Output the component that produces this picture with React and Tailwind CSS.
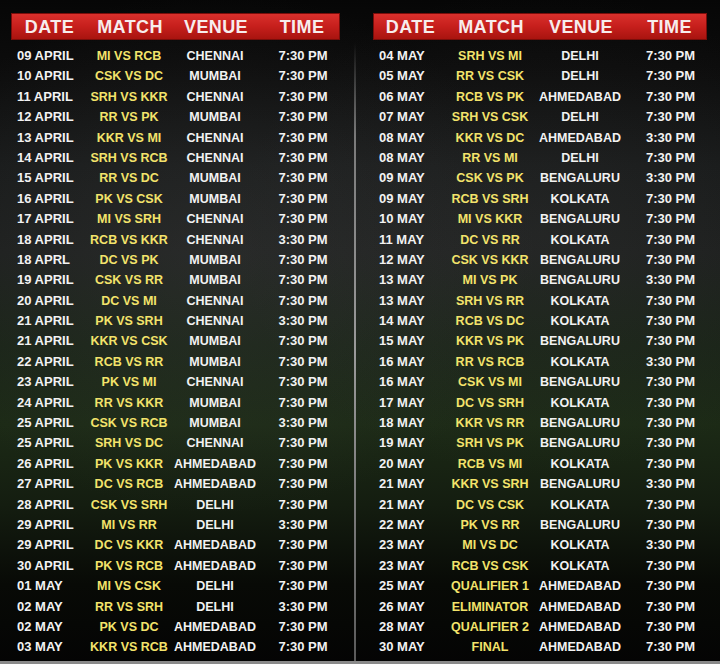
import React from "react";

const leftRows = [
  ["09 APRIL", "MI VS RCB", "CHENNAI", "7:30 PM"],
  ["10 APRIL", "CSK VS DC", "MUMBAI", "7:30 PM"],
  ["11 APRIL", "SRH VS KKR", "CHENNAI", "7:30 PM"],
  ["12 APRIL", "RR VS PK", "MUMBAI", "7:30 PM"],
  ["13 APRIL", "KKR VS MI", "CHENNAI", "7:30 PM"],
  ["14 APRIL", "SRH VS RCB", "CHENNAI", "7:30 PM"],
  ["15 APRIL", "RR VS DC", "MUMBAI", "7:30 PM"],
  ["16 APRIL", "PK VS CSK", "MUMBAI", "7:30 PM"],
  ["17 APRIL", "MI VS SRH", "CHENNAI", "7:30 PM"],
  ["18 APRIL", "RCB VS KKR", "CHENNAI", "3:30 PM"],
  ["18 APRL", "DC VS PK", "MUMBAI", "7:30 PM"],
  ["19 APRIL", "CSK VS RR", "MUMBAI", "7:30 PM"],
  ["20 APRIL", "DC VS MI", "CHENNAI", "7:30 PM"],
  ["21 APRIL", "PK VS SRH", "CHENNAI", "3:30 PM"],
  ["21 APRIL", "KKR VS CSK", "MUMBAI", "7:30 PM"],
  ["22 APRIL", "RCB VS RR", "MUMBAI", "7:30 PM"],
  ["23 APRIL", "PK VS MI", "CHENNAI", "7:30 PM"],
  ["24 APRIL", "RR VS KKR", "MUMBAI", "7:30 PM"],
  ["25 APRIL", "CSK VS RCB", "MUMBAI", "3:30 PM"],
  ["25 APRIL", "SRH VS DC", "CHENNAI", "7:30 PM"],
  ["26 APRIL", "PK VS KKR", "AHMEDABAD", "7:30 PM"],
  ["27 APRIL", "DC VS RCB", "AHMEDABAD", "7:30 PM"],
  ["28 APRIL", "CSK VS SRH", "DELHI", "7:30 PM"],
  ["29 APRIL", "MI VS RR", "DELHI", "3:30 PM"],
  ["29 APRIL", "DC VS KKR", "AHMEDABAD", "7:30 PM"],
  ["30 APRIL", "PK VS RCB", "AHMEDABAD", "7:30 PM"],
  ["01 MAY", "MI VS CSK", "DELHI", "7:30 PM"],
  ["02 MAY", "RR VS SRH", "DELHI", "3:30 PM"],
  ["02 MAY", "PK VS DC", "AHMEDABAD", "7:30 PM"],
  ["03 MAY", "KKR VS RCB", "AHMEDABAD", "7:30 PM"],
];

const rightRows = [
  ["04 MAY", "SRH VS MI", "DELHI", "7:30 PM"],
  ["05 MAY", "RR VS CSK", "DELHI", "7:30 PM"],
  ["06 MAY", "RCB VS PK", "AHMEDABAD", "7:30 PM"],
  ["07 MAY", "SRH VS CSK", "DELHI", "7:30 PM"],
  ["08 MAY", "KKR VS DC", "AHMEDABAD", "3:30 PM"],
  ["08 MAY", "RR VS MI", "DELHI", "7:30 PM"],
  ["09 MAY", "CSK VS PK", "BENGALURU", "3:30 PM"],
  ["09 MAY", "RCB VS SRH", "KOLKATA", "7:30 PM"],
  ["10 MAY", "MI VS KKR", "BENGALURU", "7:30 PM"],
  ["11 MAY", "DC VS RR", "KOLKATA", "7:30 PM"],
  ["12 MAY", "CSK VS KKR", "BENGALURU", "7:30 PM"],
  ["13 MAY", "MI VS PK", "BENGALURU", "3:30 PM"],
  ["13 MAY", "SRH VS RR", "KOLKATA", "7:30 PM"],
  ["14 MAY", "RCB VS DC", "KOLKATA", "7:30 PM"],
  ["15 MAY", "KKR VS PK", "BENGALURU", "7:30 PM"],
  ["16 MAY", "RR VS RCB", "KOLKATA", "3:30 PM"],
  ["16 MAY", "CSK VS MI", "BENGALURU", "7:30 PM"],
  ["17 MAY", "DC VS SRH", "KOLKATA", "7:30 PM"],
  ["18 MAY", "KKR VS RR", "BENGALURU", "7:30 PM"],
  ["19 MAY", "SRH VS PK", "BENGALURU", "7:30 PM"],
  ["20 MAY", "RCB VS MI", "KOLKATA", "7:30 PM"],
  ["21 MAY", "KKR VS SRH", "BENGALURU", "3:30 PM"],
  ["21 MAY", "DC VS CSK", "KOLKATA", "7:30 PM"],
  ["22 MAY", "PK VS RR", "BENGALURU", "7:30 PM"],
  ["23 MAY", "MI VS DC", "KOLKATA", "3:30 PM"],
  ["23 MAY", "RCB VS CSK", "KOLKATA", "7:30 PM"],
  ["25 MAY", "QUALIFIER 1", "AHMEDABAD", "7:30 PM"],
  ["26 MAY", "ELIMINATOR", "AHMEDABAD", "7:30 PM"],
  ["28 MAY", "QUALIFIER 2", "AHMEDABAD", "7:30 PM"],
  ["30 MAY", "FINAL", "AHMEDABAD", "7:30 PM"],
];

// column widths: date | match | venue | time
const ScheduleTable = ({ rows, cols, width }) => {
  return (
    <div className={width}>
      {/* red header bar */}
      <div
        className={`grid ${cols} h-[27px] items-center bg-[linear-gradient(to_bottom,#d9302c_0%,#c61f1c_50%,#a8140f_100%)] border border-[#7a0d0a] text-[18px] font-bold text-[#f7eded] tracking-[0.4px]`}
      >
        <div className="text-center pr-[4px]">DATE</div>
        <div className="text-center">MATCH</div>
        <div className="text-center">VENUE</div>
        <div className="text-center">TIME</div>
      </div>

      {/* match rows */}
      <div className="mt-[6px] flex flex-col">
        {rows.map((row, i) => (
          <div key={i} className={`grid ${cols} h-[20.4px] items-baseline leading-[20.4px] text-[13px] font-bold`}>
            <div className="pl-[6px] text-[#f2f2f2] whitespace-nowrap">{row[0]}</div>
            <div className="text-center text-[12.5px] text-[#f3e36b] whitespace-nowrap">{row[1]}</div>
            <div className="text-center text-[12.5px] text-[#f2f2f2] whitespace-nowrap">{row[2]}</div>
            <div className="text-center text-[#f2f2f2] whitespace-nowrap pl-[4px]">{row[3]}</div>
          </div>
        ))}
      </div>
    </div>
  );
};

const App = () => {
  return (
    <div
      className="relative w-[720px] h-[664px] overflow-hidden bg-[linear-gradient(to_bottom,#060606_0%,#0c0c0c_10%,#181a1a_25%,#1d1f1e_38%,#1a2418_52%,#1c2a16_64%,#141d10_76%,#080a06_88%,#040404_100%)]"
      style={{ fontFamily: '"Liberation Sans", Arial, sans-serif' }}
    >
      {/* soft stadium glow */}
      <div className="absolute inset-0 bg-[radial-gradient(ellipse_at_30%_38%,rgba(90,90,90,0.2)_0%,rgba(0,0,0,0)_45%),radial-gradient(ellipse_at_75%_35%,rgba(80,80,80,0.16)_0%,rgba(0,0,0,0)_40%)]" />

      <div className="relative flex pt-[13px] h-[661px]">
        <div className="ml-[11px]">
          <ScheduleTable rows={leftRows} cols="grid-cols-[79px_78px_94px_78px]" width="w-[329px]" />
        </div>

        {/* centre divider */}
        <div className="ml-[14px] mt-[30px] w-[2px] bg-[linear-gradient(to_bottom,rgba(120,120,120,0)_0%,#7a7a7a_15%,#9a9a9a_50%,#6e6e6e_85%,#5a5a5a_100%)]" />

        <div className="ml-[17px]">
          <ScheduleTable rows={rightRows} cols="grid-cols-[77px_80px_100px_77px]" width="w-[334px]" />
        </div>
      </div>

      {/* bottom edge */}
      <div className="relative h-[3px] bg-[#8a8a8a]" />
    </div>
  );
};

export default App;
